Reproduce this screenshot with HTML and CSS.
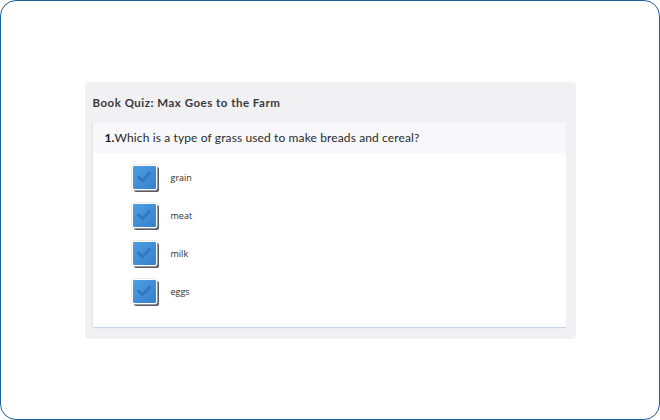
FILE: index.html
```html
<!DOCTYPE html>
<html>
<head>
<meta charset="utf-8">
<link rel="stylesheet" href="styles.css">
</head>
<body>
<div class="frame">
  <div class="panel">
    <div class="title">Book Quiz: Max Goes to the Farm</div>
    <div class="card">
      <div class="question"><b>1.</b>Which is a type of grass used to make breads and cereal?</div>
      <div class="options">
        <div class="option"><span class="box"><svg viewBox="0 0 24 24" width="22" height="22"><polyline points="6,12 10.5,16 18,8" /></svg></span><span class="label">grain</span></div>
        <div class="option"><span class="box"><svg viewBox="0 0 24 24" width="22" height="22"><polyline points="6,12 10.5,16 18,8" /></svg></span><span class="label">meat</span></div>
        <div class="option"><span class="box"><svg viewBox="0 0 24 24" width="22" height="22"><polyline points="6,12 10.5,16 18,8" /></svg></span><span class="label">milk</span></div>
        <div class="option"><span class="box"><svg viewBox="0 0 24 24" width="22" height="22"><polyline points="6,12 10.5,16 18,8" /></svg></span><span class="label">eggs</span></div>
      </div>
    </div>
  </div>
</div>
</body>
</html>
```
FILE: styles.css
```css
html, body {
  margin: 0;
  padding: 0;
  background: #ffffff;
}
body {
  width: 660px;
  height: 420px;
  font-family: Lato, "Open Sans", sans-serif;
}
.frame {
  box-sizing: border-box;
  width: 660px;
  height: 420px;
  border: 1.5px solid #1d5f9e;
  border-radius: 16px;
  padding: 80.5px 0 0 83.5px;
}
.panel {
  box-sizing: border-box;
  width: 491px;
  height: 257px;
  background: #f1f1f4;
  border-radius: 4px;
  padding: 0 10px 0 8px;
  display: flex;
  flex-direction: column;
}
.title {
  height: 40px;
  line-height: 41px;
  font-size: 11.5px;
  font-weight: 700;
  color: #3a3a3a;
  letter-spacing: 0.5px;
}
.card {
  background: #ffffff;
  height: 206px;
  box-sizing: border-box;
  border-bottom: 1.5px solid #c6d4e8;
  box-shadow: -1px 0 2px rgba(0,0,0,0.06);
  display: flex;
  flex-direction: column;
}
.question {
  height: 31px;
  line-height: 31px;
  background: #f8f8fa;
  padding-left: 12px;
  font-size: 12px;
  color: #2a2a2a;
  letter-spacing: 0.12px;
}
.question b {
  font-weight: 700;
  color: #111;
}
.options {
  padding: 12px 0 0 39px;
  display: flex;
  flex-direction: column;
  gap: 13px;
}
.option {
  display: flex;
  align-items: center;
  height: 25px;
}
.box {
  box-sizing: border-box;
  width: 25px;
  height: 25px;
  border: 1.5px solid #ffffff;
  border-radius: 2px;
  background: linear-gradient(135deg, #4f9fe2 0%, #3f8cd6 60%, #377fcb 100%);
  box-shadow: 0 0 0 0.5px #d6d6d6, 2px 2px 0 0 #5a5a66;
  display: flex;
  align-items: center;
  justify-content: center;
}
.box svg polyline {
  fill: none;
  stroke: #3577bd;
  stroke-width: 3.2;
  stroke-linecap: round;
  stroke-linejoin: round;
}
.label {
  margin-left: 14px;
  font-size: 9px;
  color: #2e2e2e;
  font-family: "Open Sans", Lato, sans-serif;
}
```
